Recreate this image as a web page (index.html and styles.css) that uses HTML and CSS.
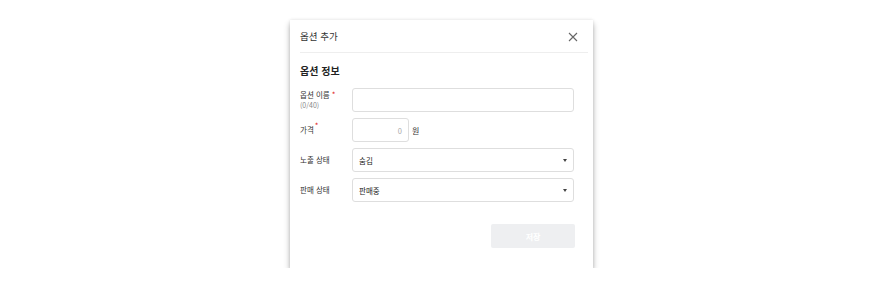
FILE: index.html
```html
<!DOCTYPE html>
<html lang="ko">
<head>
<meta charset="utf-8">
<title>옵션 추가</title>
<link rel="stylesheet" href="styles.css">
</head>
<body>
<div class="modal">
  <div class="modal-header">
    <span class="modal-title">옵션 추가</span>
    <svg class="close" width="10" height="10" viewBox="0 0 10 10"><path d="M1 1L9 9M9 1L1 9" stroke="#666" stroke-width="1.1" fill="none"/></svg>
  </div>
  <div class="modal-body">
    <div class="section-title">옵션 정보</div>
    <div class="form">
      <div class="label"><span>옵션 이름<i class="req">*</i></span><span class="count">(0/40)</span></div>
      <div class="field"><div class="input"></div></div>

      <div class="label"><span>가격<i class="req sup">*</i></span></div>
      <div class="field"><div class="input price"><span class="ph">0</span></div><span class="unit">원</span></div>

      <div class="label"><span>노출 상태</span></div>
      <div class="field"><div class="input select"><span>숨김</span><i class="caret"></i></div></div>

      <div class="label"><span>판매 상태</span></div>
      <div class="field"><div class="input select"><span>판매중</span><i class="caret"></i></div></div>
    </div>
    <div class="footer"><button class="save">저장</button></div>
  </div>
</div>
</body>
</html>
```
FILE: styles.css
```css
html, body { margin: 0; padding: 0; background: #fff; }
body { font-family: "Noto Sans CJK KR", "Noto Sans", sans-serif; color: #222; }
.modal {
  width: 303px;
  height: 248px;
  margin: 20px auto 0;
  background: #fff;
  box-shadow: 0 4px 6px rgba(0,0,0,0.3), 0 0 3px rgba(0,0,0,0.1);
  box-sizing: border-box;
}
.modal-header {
  height: 32px;
  margin: 0 5px 0 10px;
  padding-right: 10px;
  border-bottom: 1px solid #eeeeee;
  display: flex;
  align-items: center;
  justify-content: space-between;
}
.modal-title { font-size: 9.5px; color: #333; }
.close { display: block; margin-top: 1px; }
.modal-body { padding: 10px 19px 0 10px; }
.section-title { font-size: 10px; font-weight: 700; line-height: 16px; color: #222; }
.form {
  margin-top: 9px;
  display: grid;
  grid-template-columns: 52px 1fr;
  grid-auto-rows: 24px;
  row-gap: 6px;
}
.label { display: flex; flex-direction: column; justify-content: center; font-size: 7.5px; line-height: 10px; color: #333; }
.count { font-size: 7px; color: #888; }
.req { font-style: normal; color: #e02020; margin-left: 2px; font-size: 8px; }
.req.sup { position: relative; top: -4px; margin-left: 1px; }
.field { display: flex; align-items: center; }
.input {
  box-sizing: border-box;
  height: 24px;
  flex: 1;
  border: 1px solid #dedede;
  border-radius: 3px;
  display: flex;
  align-items: center;
  font-size: 7.5px;
  color: #222;
}
.input.price { flex: 0 0 57px; justify-content: flex-end; padding-right: 6px; }
.ph { color: #aaa; font-size: 7.5px; }
.unit { font-size: 8px; color: #333; margin-left: 3px; }
.select { padding: 0 6px 0 6px; justify-content: space-between; }
.caret { width: 0; height: 0; border-left: 2px solid transparent; border-right: 2px solid transparent; border-top: 3px solid #444; }
.footer { display: flex; justify-content: flex-end; margin-top: 22px; margin-right: -1px; }
.save {
  width: 84px; height: 24px;
  border: none; border-radius: 2px;
  background: #eeeff1; color: #fff;
  font-family: inherit; font-size: 8px; font-weight: 700;
  padding: 0;
}
```
